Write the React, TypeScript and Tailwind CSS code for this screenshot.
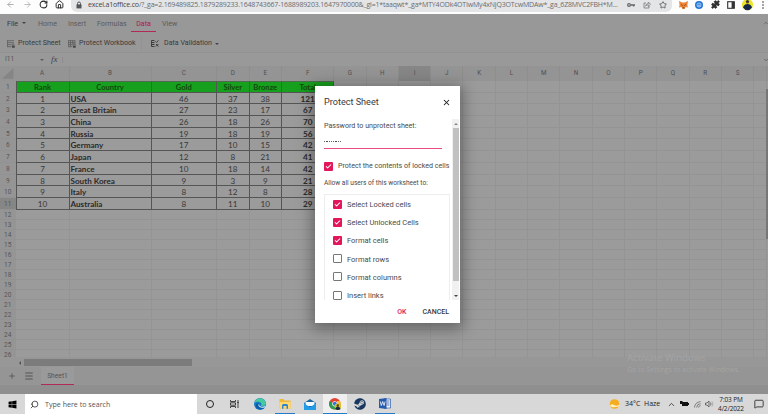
import React from "react";
import { ArrowLeft, ArrowRight, RotateCw, House, Star, Puzzle, Menu, Plus, X, Search, ChevronUp, ChevronDown, MessageSquare, Check } from "lucide-react";
import { FaWindows, FaSteam } from "react-icons/fa";

const sheet = [
  ["Rank", "Country", "Gold", "Silver", "Bronze", "Total"],
  ["1", "USA", "46", "37", "38", "121"],
  ["2", "Great Britain", "27", "23", "17", "67"],
  ["3", "China", "26", "18", "26", "70"],
  ["4", "Russia", "19", "18", "19", "56"],
  ["5", "Germany", "17", "10", "15", "42"],
  ["6", "Japan", "12", "8", "21", "41"],
  ["7", "France", "10", "18", "14", "42"],
  ["8", "South Korea", "9", "3", "9", "21"],
  ["9", "Italy", "8", "12", "8", "28"],
  ["10", "Australia", "8", "11", "10", "29"],
];
const cols = "ABCDEFGHIJKLMNOPQRS".split("").concat("");
const gridCols =
  "grid grid-cols-[15.5px_54px_82px_65.5px_32.5px_32.5px_52.3px_repeat(13,32.3px)_13px]";

function BrowserBar() {
  return (
    <div className="h-[14px] bg-[#fdfdfd] flex items-start overflow-hidden shrink-0 text-[#222]">
      <div className="w-[71px] h-[9px] flex items-center shrink-0">
        <ArrowLeft size={9} className="ml-[6px] text-[#999]" />
        <ArrowRight size={9} className="ml-[8px] text-[#aaa]" />
        <RotateCw size={9} strokeWidth={2.7} className="ml-[7px]" />
        <House size={9} strokeWidth={2.5} className="ml-[7px]" />
      </div>
      <div className="w-[589px] h-[12px] shrink-0 bg-[#e4e5e7] rounded-bl-[6px] flex pl-[5px] text-[#6c6c6c]">
        <svg viewBox="0 0 6 9" className="w-[6px] h-[9px] mt-px shrink-0">
          <path d="M1.5 4V2.5a1.5 1.5 0 0 1 3 0V4" fill="none" stroke="#555" />
          <rect x=".5" y="3.4" width="5" height="4" fill="#555" />
        </svg>
        <div className="w-[532px] ml-[6px] whitespace-nowrap font-['Open_Sans',sans-serif] text-[7px] leading-[10px] tracking-[-0.17px] shrink-0">
          <span className="text-[#444]">excel.a1office.co</span>/?_ga=2.169489825.1879289233.1648743667-1688989203.1647970000&amp;_gl=1*taaqwt*_ga*MTY4ODk4OTIwMy4xNjQ3OTcwMDAw*_ga_6Z8MVC2FBH*M...
        </div>
        <svg viewBox="0 0 8 8" className="w-[8px] h-[8px] mt-px ml-[7px] shrink-0" fill="none" stroke="#666">
          <circle cx="2" cy="4" r="1.4" strokeWidth="1.2" />
          <path d="M3.5 4H8M6.6 4v1.6" strokeWidth="1.3" />
        </svg>
        <svg viewBox="0 0 8 8" className="w-[8px] h-[8px] mt-px ml-[8px] shrink-0" fill="none" stroke="#777" strokeWidth=".8">
          <path d="M3 2H1v5h5V5M2.6 5.2C2.8 3.4 4 2.6 5.3 2.6V1l2.2 2.3-2.2 2V3.8c-1.2 0-2 .4-2.7 1.4Z" />
        </svg>
      </div>
      <div className="w-[12px] h-[12px] bg-[#e4e5e7] rounded-br-[6px] shrink-0">
        <Star size={8} strokeWidth={2.5} className="mt-px ml-[-1px] text-[#555]" />
      </div>
      <div className="flex items-start shrink-0">
        <svg viewBox="0 0 9 8" className="w-[9px] h-[8px] mt-px ml-[7px] shrink-0">
          <path d="m0 0 3.2 1.5h2.6L9 0l-.6 4 .4 2.5-2.2-.4L5.5 8h-2L2.3 6.1 0 6.5.6 4Z" fill="#ec8335" />
          <path d="m2.2 3.6 1.4 1M6.8 3.6l-1.4 1M3.5 6.8h2" stroke="#5b3319" strokeWidth=".8" />
        </svg>
        <svg viewBox="0 0 8 8" className="w-[8px] h-[8px] mt-px ml-[7px] shrink-0">
          <circle cx="4" cy="4" r="4" fill="#2476d5" />
          <circle cx="4" cy="4" r="2" fill="none" stroke="#b9d9ff" strokeWidth=".8" />
          <path d="M2.6 6 4 3.5 5.4 6" stroke="#b9d9ff" fill="none" strokeWidth=".7" />
        </svg>
        <Puzzle size={9} fill="#333" className="ml-[8px] shrink-0" />
        <svg viewBox="0 0 8 8" className="w-[8px] h-[8px] mt-px ml-[7px] shrink-0">
          <rect x=".7" y=".7" width="6.6" height="6.6" fill="none" stroke="#333" strokeWidth="1.1" />
          <rect x="4.6" y="1" width="2.8" height="6" fill="#333" />
        </svg>
        <svg viewBox="0 0 11 11" className="w-[11px] h-[11px] ml-[7px] shrink-0">
          <circle cx="5.5" cy="4.7" r="5.6" fill="#ece52a" />
          <circle cx="5.5" cy="2" r="1.6" fill="#63452d" />
          <path d="M3.5 1.5Q5.5-1 7.5 1.5ZM1 7.5Q2 4 5.5 4Q9 4 10 7.5Q8 10.3 5.5 10.3Q3 10.3 1 7.5Z" fill="#15284a" />
        </svg>
        <svg viewBox="0 0 2 8" className="w-[2px] h-[8px] mt-px ml-[9px] shrink-0" fill="#333">
          <circle cx="1" cy="1" r=".8" />
          <circle cx="1" cy="4" r=".8" />
          <circle cx="1" cy="7" r=".8" />
        </svg>
      </div>
    </div>
  );
}

function Caret({ className = "" }: { className?: string }) {
  return (
    <svg viewBox="0 0 4 2" className={"w-[4px] h-[2px] shrink-0 " + className}>
      <path d="M0 0h4L2 2Z" fill="#444" />
    </svg>
  );
}

function SheetIcon({ grid = false }: { grid?: boolean }) {
  return (
    <svg viewBox="0 0 8 8" className="w-[8px] h-[8px] shrink-0" fill="none" stroke="#555" strokeWidth=".7">
      <path d="M0 .7h7M0 2.7h7M0 4.7h4.5M0 6.7h4M.3.5v6.2" />
      {grid && <path d="M2.5.5v6M4.7.5v4M7 .5v4" />}
      <path d="M5.2 5.8V5a1 1 0 0 1 2 0v.8" />
      <rect x="4.9" y="5.7" width="2.8" height="2" fill="#444" stroke="none" />
    </svg>
  );
}

function Ribbon() {
  return (
    <div className="h-[39px] bg-[#989898] border-b border-[#929292] shrink-0 text-[#5c5c5c] text-[7.1px]">
      <div className="h-[18px] flex items-center leading-[19px]">
        <span className="ml-[7px] w-[11px] h-full text-[#3a3a3a]">File</span>
        <Caret className="ml-[4px]" />
        <span className="ml-[12px] w-[18px] h-full">Home</span>
        <span className="ml-[12px] w-[18px] h-full">Insert</span>
        <span className="ml-[11px] w-[28px] h-full">Formulas</span>
        <span className="ml-[6px] w-[25px] h-full text-center text-[#a81b48] border-b border-[#b02a55]">Data</span>
        <span className="ml-[6px] h-full">View</span>
        <ChevronUp size={6} className="ml-auto mr-[-1px]" strokeWidth={3} />
      </div>
      <div className="h-[20px] pt-[3px] flex items-center text-[#3a3a3a]">
        <span className="ml-[7px] flex"><SheetIcon /></span>
        <span className="ml-[3px] w-[43px] whitespace-nowrap">Protect Sheet</span>
        <span className="ml-[7px] flex"><SheetIcon grid /></span>
        <span className="ml-[3px] w-[57px] whitespace-nowrap">Protect Workbook</span>
        <span className="ml-[5px] w-px h-[13px] bg-[#929292]" />
        <svg viewBox="0 0 8 7" className="w-[8px] h-[7px] ml-[9px] mb-px shrink-0" fill="none" stroke="#333" strokeWidth=".9">
          <path d="M3.5.5H.5v2h3m-3 0V6.5h3M1 4.5h2.5M4.5 1.3l1 1L7.6.3M5 4l2.4 2.5M7.4 4 5 6.5" />
        </svg>
        <span className="ml-[5px] w-[49px] mb-px whitespace-nowrap">Data Validation</span>
        <Caret className="ml-[2px]" />
      </div>
    </div>
  );
}

function Spreadsheet() {
  return (
    <div className="bg-[#9b9b9b] h-[304px] shrink-0 overflow-hidden text-[#555] font-[Roboto,sans-serif]">
      <div className="h-[13px] bg-[#999] flex items-center text-[6.5px]">
        <span className="ml-[5px] w-[9px] pt-px">I11</span>
        <Caret className="ml-[26px] opacity-70" />
        <i className="ml-[7px] w-[9px] leading-none text-[9px] font-['Liberation_Serif',serif] text-[#444]">fx</i>
        <span className="ml-[2px] w-px h-[6px] bg-[#8d8d8d]" />
        <ChevronDown size={6} className="ml-auto mr-[-1px]" strokeWidth={3} />
      </div>
      <div className={gridCols + " h-[15px] bg-[#949494] text-[6.3px] leading-[15px] text-center text-[#505050]"}>
        <span className="flex justify-end items-end p-[2px]">
          <svg viewBox="0 0 12 11" className="w-[12px] h-[11px]"><path d="M12 0v11H0Z" fill="#858585" /></svg>
        </span>
        {cols.map((c, i) => (
          <span key={i} className={"border-r border-[#8e8e8e] " + (c === "I" ? "bg-[#868686]" : "")}>{c}</span>
        ))}
      </div>
      <div className="h-[276px] overflow-hidden flex">
        <div className="w-[766px] shrink-0">
          {sheet.map((row, r) => (
            <div key={r} className={gridCols + " h-[11.7px]"}>
              <span className={"text-[6.5px] leading-[13px] h-[11.7px] text-center border-b border-[#929292] " + (r === 10 ? "bg-[#868686]" : "bg-[#959595]")}>{r + 1}</span>
              {row.map((v, c) => (
                <span
                  key={c}
                  className={
                    "h-[11.7px] font-[Lato,sans-serif] border-r border-b border-[#555] whitespace-nowrap " +
                    (r === 0 ? "bg-[#17a01d] text-[#12480f] font-bold text-[7.6px] leading-[11px] text-center border-t border-t-[#4f6b50] " : "leading-[12.4px] ") +
                    (r > 0 && c === 1 ? "text-left pl-[1px] text-[8.1px] font-bold text-[#2a2a2a] " : "text-center ") +
                    (r > 0 && c === 5 ? "text-[8.2px] font-bold text-[#2a2a2a] " : "") +
                    (r > 0 && c !== 1 && c !== 5 ? "text-[8.1px] text-[#383838] " : "") +
                    (c === 0 ? "border-l" : "")
                  }
                >
                  {v}
                </span>
              ))}
              {cols.slice(6).map((_, c) => (
                <span key={c} className="border-r border-b border-[#949494]" />
              ))}
            </div>
          ))}
          {Array.from({ length: 15 }, (_, r) => (
            <div key={r} className={gridCols + " h-[10.05px]"}>
              <span className="text-[6.5px] leading-[10.5px] h-[10.05px] text-center border-b border-[#929292] bg-[#959595]">{r + 12}</span>
              {cols.map((_, c) => (
                <span key={c} className="border-r border-b border-[#949494]" />
              ))}
            </div>
          ))}
        </div>
        <div className="w-[2px] mt-[8px] h-[150px] bg-[#777]" />
      </div>
    </div>
  );
}

function SheetTabs() {
  return (
    <>
      <div className="h-[10px] pt-px bg-[#979797] flex items-center shrink-0">
        <svg viewBox="0 0 2 4" className="w-[2px] h-[4px] ml-[19px]"><path d="M2 0v4L0 2Z" fill="#555" /></svg>
        <span className="ml-[3px] w-[168px] h-[7px] bg-[#7b7b7b]" />
      </div>
      <div className="h-[18px] bg-[#959595] flex items-center shrink-0 text-[#555]">
        <Plus size={8} strokeWidth={2.5} className="ml-[8px]" />
        <Menu size={10} strokeWidth={2.5} className="ml-[8px]" />
        <span className="ml-[7px] w-[33px] h-[18px] bg-[#9a9a9a] border-b border-[#b02a55] text-center text-[6.7px] leading-[18px]">Sheet1</span>
      </div>
      <div className="h-[9px] shrink-0 bg-[#8f8f8f]" />
    </>
  );
}

function Taskbar() {
  return (
    <div className="h-[20px] bg-[#d8d8d8] flex items-center shrink-0 font-['Open_Sans',sans-serif] text-[#222]">
      <FaWindows size={9} className="ml-[8px] shrink-0" color="#000" />
      <div className="ml-[8px] w-[172px] h-[20px] bg-white flex items-center shrink-0">
        <Search size={9} className="ml-[5px] -scale-x-100" />
        <span className="ml-[6px] text-[7.1px] text-[#555] whitespace-nowrap">Type here to search</span>
      </div>
      <span className="ml-[9px] w-[8px] h-[8px] shrink-0 rounded-full border-[1.5px] border-[#222]" />
      <svg viewBox="0 0 9 8" className="w-[9px] h-[8px] ml-[16px] shrink-0" fill="none" stroke="#333" strokeWidth=".9">
        <path d="M.5 0v1.5h5V0M.5 8V6.5h5V8M.5 2.8h5v2.4h-5ZM8 0v8M7.2 2.5h1.6" />
      </svg>
      <span className="ml-[9px] w-[24px] h-full shrink-0 flex items-center justify-center">
        <svg viewBox="0 0 12 12" className="w-[12px] h-[12px]">
          <circle cx="6" cy="6" r="6" fill="#1479c9" />
          <path d="M.3 5C1.5-.5 9-1.5 11.5 4c1 2.5-.5 4-3 4-2 0-1.7-.9-1.2-1.5C8 4 3.5 2.5.3 5Z" fill="#46c99c" />
          <path d="M4.7 5.5C3.5 8 6 10.5 10.5 9.5 7 13 1.5 10.5 1.7 7.5 1.9 5.5 4 5 4.7 5.5Z" fill="#0a5ba5" />
          <path d="M5 6Q5 8.5 8 8.7 10 8.7 11.3 7.8L10.6 9.4Q5 10.5 4.3 7Z" fill="#d8e7ec" />
        </svg>
      </span>
      <span className="ml-[3px] w-[20px] h-full shrink-0 flex items-center justify-center border-b border-[#2379c7] pt-px">
        <svg viewBox="0 0 12 10" className="w-[12px] h-[10px]">
          <path d="M.5 0h4l1 1.5h6V9.5H.5Z" fill="#f0b83b" />
          <path d="M.5 3h11v6.5H.5Z" fill="#ffd970" />
          <path d="M3 9.8V6.5Q3 5 4.5 5h3Q9 5 9 6.5v3.3H7.5V7h-3v2.8Z" fill="#2884cf" />
        </svg>
      </span>
      <span className="ml-[3px] w-[24px] h-full shrink-0 flex items-center justify-center">
        <svg viewBox="0 0 12 11" className="w-[12px] h-[11px]">
          <path d="M0 4 6 0l6 4v7H0Z" fill="#1764a5" />
          <path d="M1.5 3h9v4h-9Z" fill="#f7fbff" />
          <path d="m0 4.3 6 4 6-4V11H0Z" fill="#249be7" />
        </svg>
      </span>
      <span className="ml-[1px] w-[24px] h-full shrink-0 bg-[#efefef] border-b border-[#2379c7] flex items-center justify-center">
        <svg viewBox="0 0 12 12" className="w-[12px] h-[12px]">
          <circle cx="5.8" cy="5.8" r="5.8" fill="#e34334" />
          <path d="M.8 3A5.8 5.8 0 0 0 5.8 11.6L7 8Z" fill="#249d53" />
          <path d="M11 3a5.8 5.8 0 0 1-5.2 8.6L8 6V3Z" fill="#f4c22e" />
          <circle cx="5.8" cy="5.8" r="2.6" fill="#fff" />
          <circle cx="5.8" cy="5.8" r="2" fill="#3176d8" />
          <circle cx="8.8" cy="8.8" r="3.2" fill="#d6bd25" />
          <circle cx="8.8" cy="7.5" r="1.2" fill="#59401e" />
          <path d="M6 11Q7 8.5 8.8 8.5T11.6 11Q9 13 6 11Z" fill="#182943" />
        </svg>
      </span>
      <FaSteam size={12} className="ml-[7px] shrink-0" color="#17375f" />
      <span className="ml-[9px] w-[20px] h-full shrink-0 flex items-center justify-center border-b border-[#2379c7]">
        <svg viewBox="0 0 12 11" className="w-[12px] h-[11px]">
          <path d="M5 1h6.5v9H5Z" fill="#f2f6fc" stroke="#2d5dab" strokeWidth=".7" />
          <path d="M7.5 3h3M7.5 5h3M7.5 7h3" stroke="#2d5dab" strokeWidth=".8" />
          <path d="m0 1 7.5-1v11L0 10Z" fill="#255bac" />
          <path d="m1.3 3.5 1 4 1.4-4 1.4 4 1-4" fill="none" stroke="#fff" strokeWidth=".8" />
        </svg>
      </span>
      <svg viewBox="0 0 11 10" className="w-[11px] h-[10px] ml-auto shrink-0">
        <circle cx="5.5" cy="5" r="4.8" fill="#f5ac20" />
        <path d="M1 6.5Q3 4.5 5 6 8 7.5 10.5 5.5L9.5 7.5Q5 9 2 7.8Z" fill="#fff0bd" />
      </svg>
      <span className="ml-[5px] w-[15px] text-[7px] whitespace-nowrap">34°C</span>
      <span className="ml-[4px] w-[16px] text-[7px]">Haze</span>
      <ChevronUp size={9} className="ml-[7px] shrink-0" />
      <svg viewBox="0 0 9 6" className="w-[9px] h-[6px] ml-[4px] shrink-0" fill="#111">
        <path d="M2 1h6v4H2ZM8 2h1v2H8ZM0 0h2.5v3H0Z" />
      </svg>
      <svg viewBox="0 0 8 8" className="w-[7px] h-[7px] ml-[5px] shrink-0" fill="none" stroke="#555" strokeWidth=".8">
        <path d="M.5 7.5Q1 1.5 7.5.7M3 7.5Q3 3.5 7.5 3M5.2 7.5Q5.3 5.5 7.5 5.2" />
      </svg>
      <svg viewBox="0 0 9 8" className="w-[9px] h-[8px] ml-[4px] shrink-0" fill="none" stroke="#444" strokeWidth=".7">
        <path d="M.5 3h1.5L4 1v6L2 5H.5ZM5.5 2.5Q6.5 4 5.5 5.5" />
        <path d="M7 1.5Q8.8 4 7 6.5" stroke="#999" />
      </svg>
      <span className="ml-[4px] w-[26px] shrink-0 text-center text-[6.5px] leading-[9px] whitespace-nowrap tracking-[-0.15px]">7:03 PM<br />4/2/2022</span>
      <MessageSquare size={10} strokeWidth={2} className="ml-[10px] mr-[4px] shrink-0" />
    </div>
  );
}

function Box({ checked }: { checked: boolean }) {
  return (
    <span className={"w-[9px] h-[9px] shrink-0 rounded-[1px] flex items-center justify-center " + (checked ? "bg-[#e3165b]" : "border border-[#777]")}>
      {checked && <Check size={7} strokeWidth={3.5} color="#fff" />}
    </span>
  );
}

const permissions: [string, boolean][] = [
  ["Select Locked cells", true],
  ["Select Unlocked Cells", true],
  ["Format cells", true],
  ["Format rows", false],
  ["Format columns", false],
  ["Insert links", false],
];

function ProtectDialog() {
  return (
    <div className="absolute left-[315px] top-[86px] w-[145px] h-[237px] bg-white shadow-[0_3px_14px_3px_rgba(0,0,0,0.35)] text-[#4a4a4a] text-[7.1px]">
      <div className="h-[33px] pl-[9px] pr-[9px] flex items-center justify-between">
        <span className="text-[9.1px] text-[#3a3a3a]">Protect Sheet</span>
        <X size={9} strokeWidth={2.8} color="#222" />
      </div>
      <div className="h-[181px] flex overflow-hidden">
        <div className="w-[137px] pl-[9px] shrink-0">
          <div className="h-[15px] leading-[14px] whitespace-nowrap">Password to unprotect sheet:</div>
          <div className="h-[15px] w-[118px] pt-[1px] border-b border-[#e94d80] flex items-center gap-[1px]">
            {Array.from({ length: 8 }, (_, i) => (
              <span key={i} className="w-[1.3px] h-[1.5px] rounded-full bg-[#333]" />
            ))}
          </div>
          <div className="h-[34px] flex items-center gap-[5px] whitespace-nowrap">
            <Box checked />
            <span>Protect the contents of locked cells</span>
          </div>
          <div className="h-[12px] mt-[-6px] text-[6.6px] leading-[13px] whitespace-nowrap">Allow all users of this worksheet to:</div>
          <div className="mt-[5px] w-[126px] h-[140px] border border-[#eee] pl-[8px] text-[7.5px]">
            {permissions.map(([name, on]) => (
              <div key={name} className="h-[18.2px] flex items-center gap-[5px]">
                <Box checked={on} />
                <span className="whitespace-nowrap pt-px">{name}</span>
              </div>
            ))}
          </div>
        </div>
        <div className="w-[7px] shrink-0 bg-[#f1f1f1] flex flex-col items-center">
          <span className="h-[9px] flex items-center"><Caret className="rotate-180 opacity-60" /></span>
          <span className="w-[6px] h-[153px] bg-[#c1c1c1]" />
          <span className="mt-auto h-[8px] flex items-center"><Caret /></span>
        </div>
      </div>
      <div className="h-[23px] flex items-center justify-end pr-[11px] pt-[2px] gap-[16px] font-medium text-[7px]">
        <span className="text-[#e3165b]">OK</span>
        <span className="text-[#3a3a3a]">CANCEL</span>
      </div>
    </div>
  );
}

export default function App() {
  return (
    <div className="relative w-[768px] h-[414px] overflow-hidden flex flex-col font-[Roboto,sans-serif] bg-[#989898]">
      <BrowserBar />
      <Ribbon />
      <Spreadsheet />
      <SheetTabs />
      <Taskbar />
      <div className="absolute left-[627px] top-[352px] text-[#a4a4a4] font-['Open_Sans',sans-serif] whitespace-nowrap">
        <div className="text-[9.6px] leading-[12px]">Activate Windows</div>
        <div className="text-[6.9px] leading-[12px]">Go to Settings to activate Windows.</div>
      </div>
      <ProtectDialog />
    </div>
  );
}
